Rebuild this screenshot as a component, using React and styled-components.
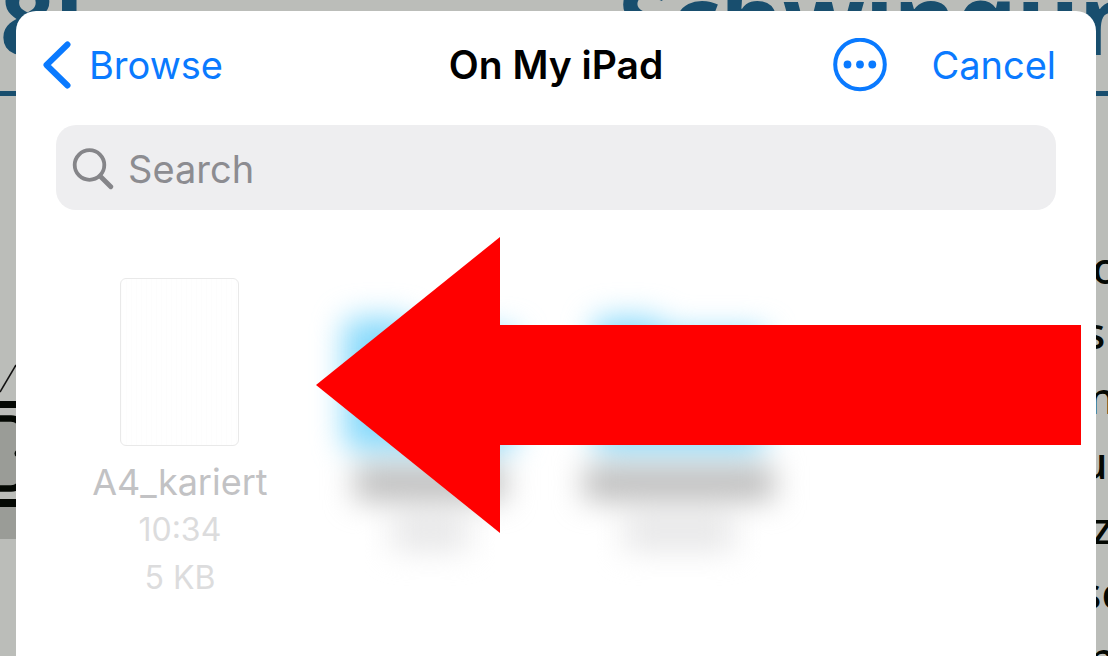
import React from "react";
import styled, { createGlobalStyle } from "styled-components";

const GlobalStyle = createGlobalStyle`
  *, *::before, *::after { box-sizing: border-box; }
  body { margin: 0; background: #bbbdb9; }
  button, input { font: inherit; }
`;

const Screen = styled.div`
  position: relative;
  display: flex;
  min-height: 100vh;
  padding: 11px 12px 0 16px;
  overflow: hidden;
  font-family: Inter, "Liberation Sans", sans-serif;
`;

/* Dimmed worksheet behind the sheet */
const Worksheet = styled.div`
  position: absolute;
  inset: 0;
  overflow: hidden;
  background: #bbbdb9;
  font-family: "Noto Sans", sans-serif;
`;

const WorksheetHeader = styled.div`
  display: flex;
  justify-content: space-between;
  height: 96px;
  border-bottom: 5px solid #184e6e;
  color: #184e6e;
  font-size: 96px;
  font-weight: 700;
  line-height: 36px;
  white-space: nowrap;
`;

const WorksheetTopic = styled.span`
  width: 490px;
`;

const WorksheetBody = styled.div`
  display: flex;
  justify-content: space-between;
  padding-top: 139px;
`;

const Diagram = styled.svg`
  width: 16px;
  height: 200px;
  margin-top: 105px;
`;

const Lines = styled.div`
  width: 16px;
  color: #040803;
  font-size: 44px;
  font-weight: 500;
  line-height: 65px;
  white-space: nowrap;
`;

const Line = styled.div`
  text-indent: ${(p) => p.$indent}px;
`;

const Sheet = styled.main`
  position: relative;
  flex: 1;
  min-width: 0;
  background: #fff;
  border-radius: 20px 20px 0 0;
`;

const Header = styled.header`
  display: grid;
  grid-template-columns: 1fr auto 1fr;
  align-items: center;
  padding: 27px 27px 33px;
`;

const Title = styled.h1`
  margin: 0;
  color: #000;
  font-size: 39px;
  font-weight: 600;
  line-height: 54px;
`;

const Actions = styled.div`
  display: flex;
  align-items: center;
  justify-content: flex-end;
  gap: 44px;
  padding-right: 13px;
`;

const NavButton = styled.button`
  display: flex;
  align-items: center;
  justify-self: start;
  gap: 18px;
  padding: 0;
  border: 0;
  background: none;
  color: #0a7aff;
  font-size: 38px;
  line-height: 54px;
  cursor: pointer;
`;

const SearchField = styled.label`
  display: flex;
  align-items: center;
  gap: 14px;
  height: 85px;
  margin: 0 40px;
  padding: 2px 16px 0;
  border-radius: 20px;
  background: #eeeef0;
  color: #858589;
`;

const SearchInput = styled.input`
  flex: 1;
  min-width: 0;
  padding: 0;
  border: 0;
  outline: 0;
  background: none;
  color: #000;
  font-size: 38px;
  line-height: 54px;
  &::placeholder { color: #8c8c91; opacity: 1; }
`;

const FileGrid = styled.ul`
  display: grid;
  grid-template-columns: repeat(auto-fill, minmax(240px, 1fr));
  margin: 0;
  padding: 68px 42px 40px 39px;
  list-style: none;
`;

const FileItem = styled.li`
  display: flex;
  flex-direction: column;
  align-items: center;
`;

const PageThumb = styled.div`
  width: 119px;
  height: 168px;
  margin-bottom: 12px;
  border: 1px solid #e9e9e9;
  border-radius: 6px;
  background: repeating-linear-gradient(90deg, #fdfdfd 0 1px, #fff 1px 5px);
`;

const FileName = styled.span`
  color: #c2c2c4;
  font-size: 36px;
  line-height: 48px;
`;

const FileMeta = styled.span`
  color: #dcdcdd;
  font-size: 32px;
  line-height: 48px;
`;

const HiddenItem = styled(FileItem)`
  padding-top: 40px;
  filter: blur(15px);
`;

const Folder = styled.div`
  width: 172px;
  height: 132px;
  border-radius: 12px;
  background: #86d9fb;
  clip-path: polygon(0 0, 36% 0, 42% 10%, 100% 10%, 100% 100%, 0 100%);
`;

const Smudge = styled.div`
  width: ${(p) => p.$width}px;
  height: 34px;
  margin-top: 16px;
  background: ${(p) => (p.$faint ? "#e6e6e7" : "#bababa")};
`;

const Arrow = styled.div`
  position: absolute;
  top: 226px;
  left: 300px;
  right: 15px;
  display: flex;
  align-items: center;
  pointer-events: none;
`;

const ArrowHead = styled.svg`
  flex: none;
  width: 184px;
  height: 296px;
`;

const ArrowShaft = styled.div`
  flex: 1;
  height: 120px;
  background: #f00;
`;

const lines = [
  { text: "o", indent: 0 },
  { text: "s", indent: -8 },
  { text: "n", indent: -4 },
  { text: "u", indent: -12 },
  { text: "z", indent: 0 },
  { text: "sc", indent: -12 },
  { text: "n", indent: -4 },
];

const folders = [
  { id: "first", name: 150, meta: 76 },
  { id: "second", name: 190, meta: 110 },
];

export default function App() {
  return (
    <Screen>
      <GlobalStyle />
      <Worksheet aria-hidden="true">
        <WorksheetHeader>
          <span>8l</span>
          <WorksheetTopic>Schwingun</WorksheetTopic>
        </WorksheetHeader>
        <WorksheetBody>
          <Diagram viewBox="0 340 16 200">
            <path d="M0 392 16 365" stroke="#111" strokeWidth="1.5" />
            <path d="M0 507h16v32H0z" fill="#9a9c97" />
            <path
              d="M-4 418.500H11Q18 418.500 20 424V483Q18 488.500 11 488.500H-4"
              fill="#9a9c97"
              stroke="#040803"
              strokeWidth="6.500"
            />
            <path d="M0 401h16v7H0zM0 499h16v8H0z" fill="#040803" />
            <circle cx="18" cy="453.500" r="3.500" fill="#040803" />
          </Diagram>
          <Lines>
            {lines.map((l, i) => (
              <Line key={i} $indent={l.indent}>{l.text}</Line>
            ))}
          </Lines>
        </WorksheetBody>
      </Worksheet>

      <Sheet>
        <Header>
          <NavButton type="button">
            <svg width="28" height="48" viewBox="0 0 28 48" fill="none" aria-hidden="true">
              <path d="M24.500 3.500 3.500 24 24.500 44.500" stroke="currentColor" strokeWidth="6" strokeLinecap="round" strokeLinejoin="round" />
            </svg>
            Browse
          </NavButton>
          <Title>On My iPad</Title>
          <Actions>
            <NavButton type="button" aria-label="More">
              <svg width="54" height="54" viewBox="0 0 54 54" aria-hidden="true">
                <circle cx="27" cy="26.500" r="24.800" fill="none" stroke="currentColor" strokeWidth="4" />
                <g fill="currentColor">
                  <circle cx="14.500" cy="26.500" r="3.900" />
                  <circle cx="27" cy="26.500" r="3.900" />
                  <circle cx="39.300" cy="26.500" r="3.900" />
                </g>
              </svg>
            </NavButton>
            <NavButton type="button">Cancel</NavButton>
          </Actions>
        </Header>

        <SearchField>
          <svg width="42" height="42" viewBox="0 0 42 42" fill="none" stroke="currentColor" strokeLinecap="round" aria-hidden="true">
            <circle cx="17.500" cy="17" r="14.800" strokeWidth="3.800" />
            <path d="M28.500 28.500 38.800 38.800" strokeWidth="4.800" />
          </svg>
          <SearchInput type="search" placeholder="Search" aria-label="Search" />
        </SearchField>

        <FileGrid>
          <FileItem>
            <PageThumb />
            <FileName>A4_kariert</FileName>
            <FileMeta>10:34</FileMeta>
            <FileMeta>5 KB</FileMeta>
          </FileItem>
          {folders.map((f) => (
            <HiddenItem key={f.id}>
              <Folder />
              <Smudge $width={f.name} />
              <Smudge $width={f.meta} $faint />
            </HiddenItem>
          ))}
        </FileGrid>

        <Arrow aria-hidden="true">
          <ArrowHead viewBox="0 0 184 296">
            <path d="M0 148 184 0V296Z" fill="#f00" />
          </ArrowHead>
          <ArrowShaft />
        </Arrow>
      </Sheet>
    </Screen>
  );
}
